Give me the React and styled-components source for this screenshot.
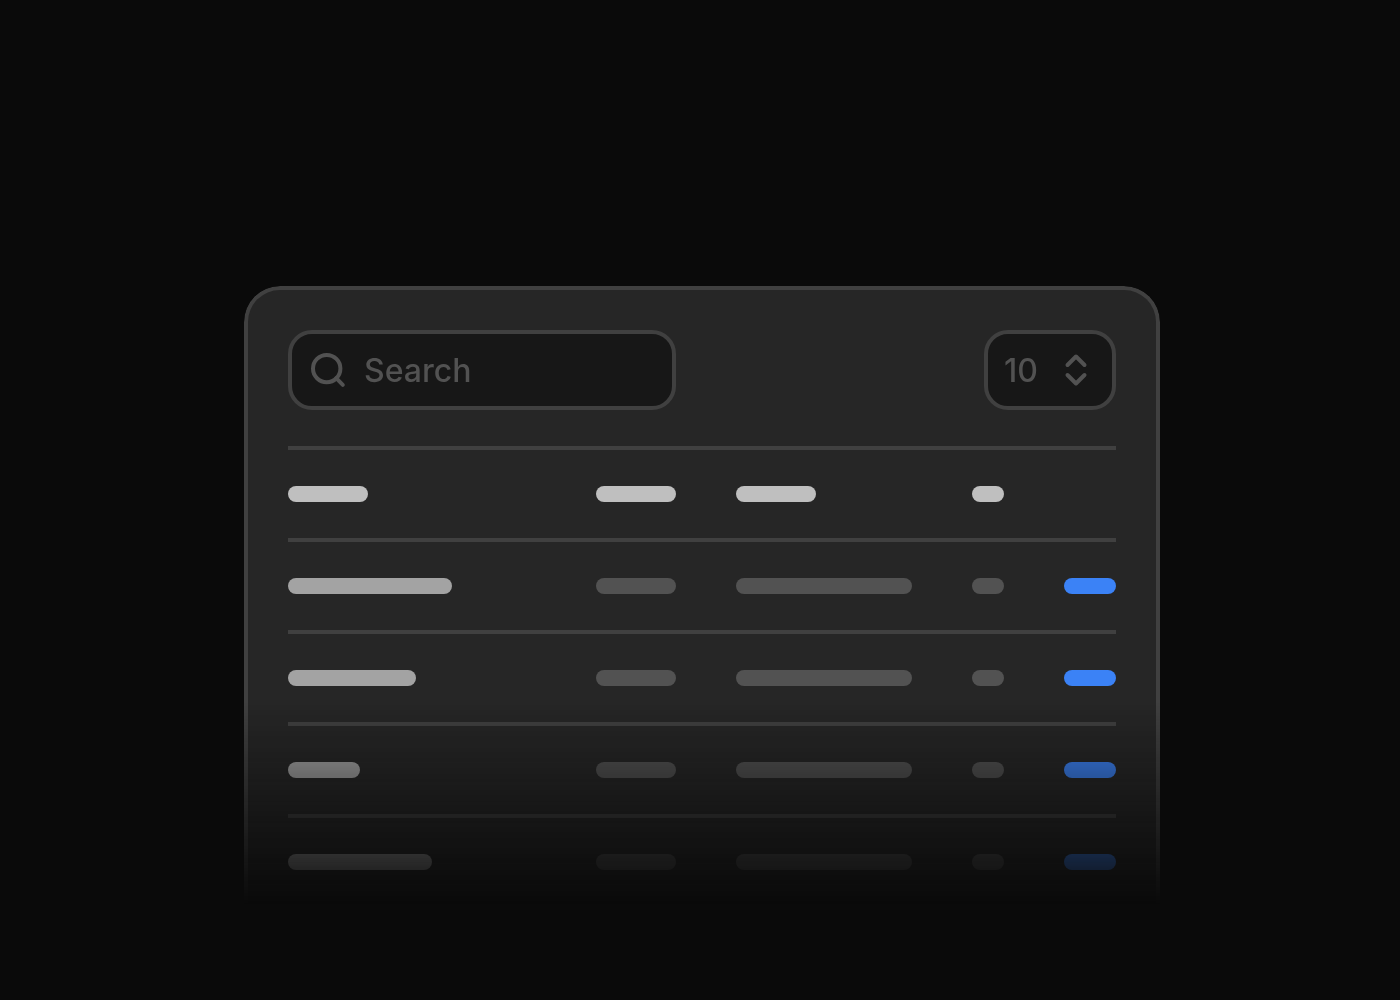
import React from "react";
import styled, { createGlobalStyle } from "styled-components";

const GlobalStyle = createGlobalStyle`
  *, *::before, *::after { box-sizing: border-box; }
  body {
    margin: 0;
    background: #0a0a0a;
    font-family: Inter, "Liberation Sans", sans-serif;
  }
`;

const Page = styled.main`
  display: flex;
  justify-content: center;
  padding: 286px 0 88px 4px;
`;

const Card = styled.section`
  width: 100%;
  max-width: 916px;
  padding: 40px 40px 0;
  border: 4px solid #404040;
  border-bottom: 0;
  border-radius: 36px 36px 0 0;
  background: #262626;
  mask-image: linear-gradient(to bottom, #000 416px, transparent 618px);
`;

const Toolbar = styled.div`
  display: flex;
  justify-content: space-between;
  gap: 24px;
  margin-bottom: 36px;
`;

const Field = styled.label`
  display: flex;
  align-items: center;
  gap: 16px;
  width: ${({ $width }) => $width}px;
  height: 80px;
  padding: 0 16px;
  border: 4px solid #404040;
  border-radius: 24px;
  background: #171717;
  color: #525252;
`;

const Icon = styled.svg`
  flex: none;
  width: 40px;
  height: 40px;
  fill: none;
  stroke: currentColor;
  stroke-width: 4;
  stroke-linecap: round;
  stroke-linejoin: round;
`;

const SearchInput = styled.input`
  flex: 1;
  min-width: 0;
  padding: 2px 0 0;
  border: 0;
  outline: 0;
  background: transparent;
  color: inherit;
  font: 500 32px/40px Inter, "Liberation Sans", sans-serif;

  &::placeholder {
    color: inherit;
    opacity: 1;
  }
`;

const SizeSelect = styled.select`
  flex: 1;
  min-width: 0;
  padding: 2px 0 0;
  border: 0;
  outline: 0;
  appearance: none;
  background: transparent;
  color: inherit;
  font: 500 32px/40px Inter, "Liberation Sans", sans-serif;
`;

const SizeField = styled(Field)`
  gap: 0;
`;

const Table = styled.table`
  width: 100%;
  table-layout: fixed;
  border-collapse: separate;
  border-spacing: 0;
`;

const Column = styled.col`
  width: ${({ $width }) => $width};
`;

const Cell = styled.td`
  height: 92px;
  padding: 36px 0;
  border-top: 4px solid #404040;
`;

const tones = {
  head: "#bfbfbf",
  name: "#a3a3a3",
  muted: "#525252",
  action: "#3b82f6",
};

const Bar = styled.div`
  width: ${({ $width }) => $width}px;
  height: 16px;
  border-radius: 8px;
  background: ${({ $tone }) => tones[$tone]};
`;

const columns = ["auto", "140px", "236px", "92px", "52px"];
const headWidths = [80, 80, 80, 32, 0];
const nameWidths = [164, 128, 72, 144];

export default function App() {
  return (
    <Page>
      <GlobalStyle />
      <Card>
        <Toolbar>
          <Field $width={388}>
            <Icon viewBox="0 0 40 40" aria-hidden="true">
              <circle cx="18.7" cy="18.6" r="13.7" />
              <path d="M28.2 28.2l6.6 6.6" />
            </Icon>
            <SearchInput type="text" placeholder="Search" aria-label="Search" />
          </Field>
          <SizeField $width={132}>
            <SizeSelect aria-label="Rows" defaultValue="10">
              <option value="10">10</option>
            </SizeSelect>
            <Icon viewBox="0 0 40 40" aria-hidden="true">
              <path d="M11.5 15l8.5-8.5 8.5 8.5M11.5 25l8.5 8.5 8.5-8.5" />
            </Icon>
          </SizeField>
        </Toolbar>
        <Table>
          <colgroup>
            {columns.map((width, i) => (
              <Column key={i} $width={width} />
            ))}
          </colgroup>
          <thead>
            <tr>
              {headWidths.map((width, i) => (
                <Cell as="th" key={i}>
                  {width > 0 && <Bar $width={width} $tone="head" />}
                </Cell>
              ))}
            </tr>
          </thead>
          <tbody>
            {nameWidths.map((width) => (
              <tr key={width}>
                <Cell><Bar $width={width} $tone="name" /></Cell>
                <Cell><Bar $width={80} $tone="muted" /></Cell>
                <Cell><Bar $width={176} $tone="muted" /></Cell>
                <Cell><Bar $width={32} $tone="muted" /></Cell>
                <Cell><Bar $width={52} $tone="action" /></Cell>
              </tr>
            ))}
          </tbody>
        </Table>
      </Card>
    </Page>
  );
}
